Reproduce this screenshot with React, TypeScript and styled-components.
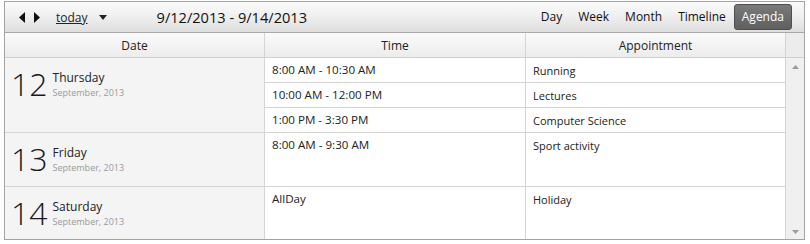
import React from 'react'
import styled, { createGlobalStyle } from 'styled-components'

const GlobalStyle = createGlobalStyle`
  html, body {
    margin: 0;
    padding: 0;
    background: #ffffff;
  }
  body {
    font-family: "Open Sans", "Noto Sans", sans-serif;
    color: #222;
  }
`

type Item = { time: string; title: string }
type Day = { num: number; name: string; month: string; items: Item[]; height: number }

const days: Day[] = [
  {
    num: 12,
    name: 'Thursday',
    month: 'September, 2013',
    height: 75,
    items: [
      { time: '8:00 AM - 10:30 AM', title: 'Running' },
      { time: '10:00 AM - 12:00 PM', title: 'Lectures' },
      { time: '1:00 PM - 3:30 PM', title: 'Computer Science' },
    ],
  },
  {
    num: 13,
    name: 'Friday',
    month: 'September, 2013',
    height: 54,
    items: [{ time: '8:00 AM - 9:30 AM', title: 'Sport activity' }],
  },
  {
    num: 14,
    name: 'Saturday',
    month: 'September, 2013',
    height: 54,
    items: [{ time: 'AllDay', title: 'Holiday' }],
  },
]

const views = ['Day', 'Week', 'Month', 'Timeline', 'Agenda']

const App = () => {
  return (
    <>
      <GlobalStyle />
      <Page>
        <Scheduler>
          <Toolbar>
            <NavArrows>
              <svg width="22" height="11" viewBox="0 0 22 11">
                <polygon points="6,0 6,11 0,5.5" fill="#111" />
                <polygon points="15,0 15,11 21,5.5" fill="#111" />
              </svg>
            </NavArrows>
            <TodayLink>today</TodayLink>
            <DropArrow>
              <svg width="8" height="5" viewBox="0 0 8 5">
                <polygon points="0,0 8,0 4,5" fill="#222" />
              </svg>
            </DropArrow>
            <RangeTitle>9/12/2013 - 9/14/2013</RangeTitle>
            <ViewTabs>
              {views.map((v) => (
                <ViewTab key={v} $active={v === 'Agenda'}>
                  {v}
                </ViewTab>
              ))}
            </ViewTabs>
          </Toolbar>

          <HeaderRow>
            <HeaderCell>Date</HeaderCell>
            <HeaderCell>Time</HeaderCell>
            <HeaderCell>Appointment</HeaderCell>
            <HeaderFiller />
          </HeaderRow>

          <BodyWrap>
            <Rows>
              {days.map((d) => (
                <DayRow key={d.num} style={{ height: d.height }}>
                  <DateCell>
                    <DayNum>{d.num}</DayNum>
                    <DayText>
                      <DayName>{d.name}</DayName>
                      <MonthName>{d.month}</MonthName>
                    </DayText>
                  </DateCell>
                  <ItemList>
                    {d.items.map((it, i) => (
                      <ItemRow key={i} $last={i === d.items.length - 1}>
                        <TimeCell>{it.time}</TimeCell>
                        <TitleCell>{it.title}</TitleCell>
                      </ItemRow>
                    ))}
                  </ItemList>
                </DayRow>
              ))}
            </Rows>
            <ScrollBar>
              <svg width="7" height="4" viewBox="0 0 7 4">
                <polygon points="0,4 7,4 3.5,0" fill="#9a9a9a" />
              </svg>
              <svg width="7" height="4" viewBox="0 0 7 4">
                <polygon points="0,0 7,0 3.5,4" fill="#9a9a9a" />
              </svg>
            </ScrollBar>
          </BodyWrap>
        </Scheduler>
      </Page>
    </>
  )
}

export default App

const Page = styled.div`
  width: 810px;
  height: 244px;
  padding: 1px 0 0 4px;
  box-sizing: border-box;
`

const Scheduler = styled.div`
  width: 801px;
  height: 239px;
  box-sizing: border-box;
  border: 1px solid #a3a3a3;
  display: flex;
  flex-direction: column;
  overflow: hidden;
`

const Toolbar = styled.div`
  height: 31px;
  flex: none;
  display: flex;
  align-items: center;
  background: linear-gradient(#fbfbfb, #f0f0f0 45%, #dedede);
  border-bottom: 1px solid #a8a8a8;
  box-sizing: border-box;
  padding-left: 14px;
`

const NavArrows = styled.div`
  display: flex;
  align-items: center;
  width: 37px;
`

const TodayLink = styled.span`
  font-size: 12px;
  color: #222;
  text-decoration: underline;
`

const DropArrow = styled.span`
  display: flex;
  margin-left: 11px;
  margin-top: 1px;
`

const RangeTitle = styled.div`
  font-size: 14.6px;
  color: #111;
  margin-left: 50px;
`

const ViewTabs = styled.div`
  margin-left: auto;
  display: flex;
  align-items: center;
  padding-right: 12px;
`

const ViewTab = styled.div<{ $active?: boolean }>`
  font-size: 12px;
  padding: 3px 7px 4px;
  border-radius: 3px;
  color: ${(p) => (p.$active ? '#ffffff' : '#111')};
  background: ${(p) => (p.$active ? 'linear-gradient(#7a7a7a, #5f5f5f)' : 'transparent')};
  border: 1px solid ${(p) => (p.$active ? '#4f4f4f' : 'transparent')};
`

const HeaderRow = styled.div`
  height: 25px;
  flex: none;
  display: grid;
  grid-template-columns: 260px 261px 260px 1fr;
  border-bottom: 1px solid #cfcfcf;
  background: linear-gradient(#fbfbfb, #ececec);
  box-sizing: border-box;
`

const HeaderCell = styled.div`
  display: flex;
  align-items: center;
  justify-content: center;
  font-size: 12px;
  color: #222;
  border-right: 1px solid #d4d4d4;
`

const HeaderFiller = styled.div`
  background: #ececec;
`

const BodyWrap = styled.div`
  flex: 1;
  display: flex;
  min-height: 0;
`

const Rows = styled.div`
  flex: 1;
  display: flex;
  flex-direction: column;
  overflow: hidden;
`

const DayRow = styled.div`
  flex: none;
  display: grid;
  grid-template-columns: 260px 1fr;
  border-bottom: 1px solid #d4d4d4;
  box-sizing: border-box;
`

const DateCell = styled.div`
  display: flex;
  align-items: flex-start;
  background: #f4f4f4;
  border-right: 1px solid #d4d4d4;
  padding: 8px 0 0 6px;
`

const DayNum = styled.div`
  font-family: "Open Sans", sans-serif;
  font-weight: 300;
  font-size: 32px;
  line-height: 36px;
  color: #1a1a1a;
`

const DayText = styled.div`
  display: flex;
  flex-direction: column;
  margin-left: 5px;
  margin-top: 3px;
`

const DayName = styled.div`
  font-size: 12px;
  line-height: 17px;
  color: #222;
`

const MonthName = styled.div`
  font-size: 9px;
  line-height: 14px;
  color: #9a9a9a;
`

const ItemList = styled.div`
  display: flex;
  flex-direction: column;
`

const ItemRow = styled.div<{ $last?: boolean }>`
  display: grid;
  grid-template-columns: 261px 1fr;
  height: ${(p) => (p.$last ? 'auto' : '25px')};
  flex: ${(p) => (p.$last ? '1' : 'none')};
  border-bottom: ${(p) => (p.$last ? 'none' : '1px solid #d4d4d4')};
  box-sizing: border-box;
`

const TimeCell = styled.div`
  font-size: 11.6px;
  color: #222;
  padding: 4px 0 0 7px;
  border-right: 1px solid #d4d4d4;
`

const TitleCell = styled.div`
  font-size: 11px;
  color: #222;
  padding: 5px 0 0 7px;
  border-right: 1px solid #d4d4d4;
`

const ScrollBar = styled.div`
  width: 18px;
  flex: none;
  background: #f0f0f0;
  display: flex;
  flex-direction: column;
  justify-content: space-between;
  align-items: center;
  padding: 7px 0 5px;
  box-sizing: border-box;
`
